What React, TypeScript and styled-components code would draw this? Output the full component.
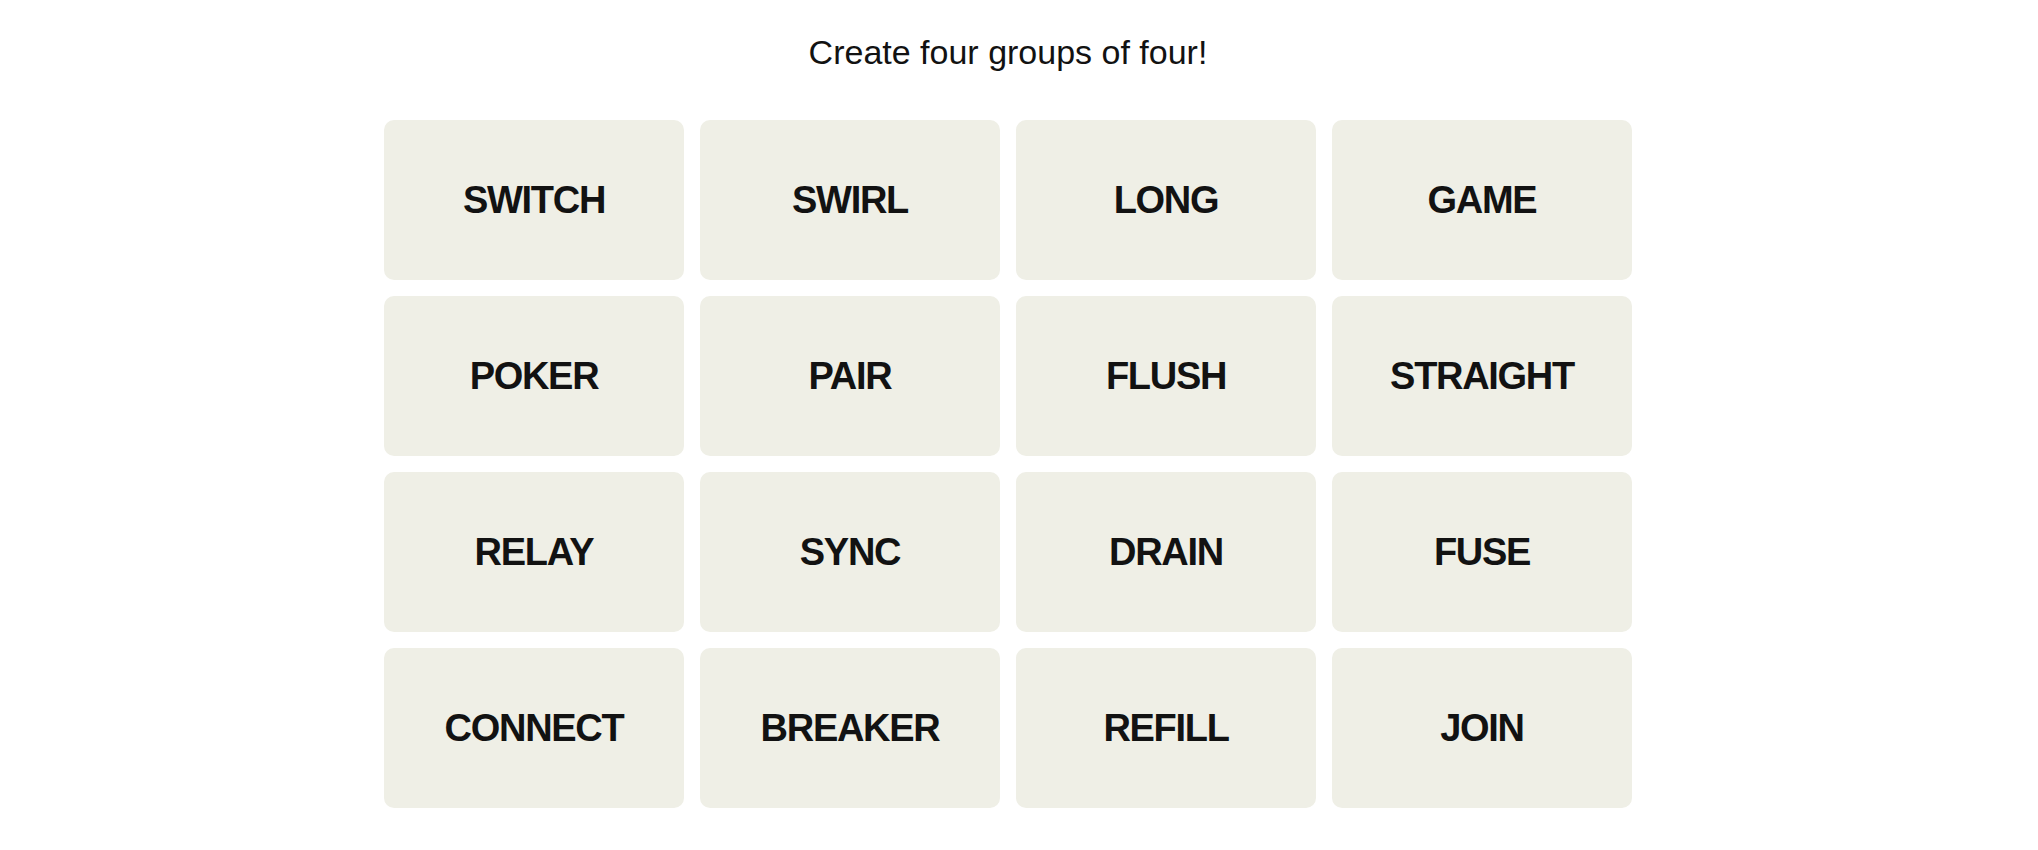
import { FC } from 'react';
import styled, { createGlobalStyle } from 'styled-components';

const GlobalStyle = createGlobalStyle`
  body {
    margin: 0;
    background: #ffffff;
    font-family: 'Liberation Sans', Arial, sans-serif;
    color: #121212;
  }
`;

const Page = styled.main`
  display: flex;
  flex-direction: column;
  align-items: center;
  padding: 32px 22px 0 0;
`;

const Prompt = styled.p`
  margin: 0 0 48px;
  font-size: 34px;
  line-height: 40px;
  font-weight: 400;
`;

const Board = styled.div`
  display: grid;
  grid-template-columns: repeat(4, 300px);
  grid-auto-rows: 160px;
  gap: 16px;
`;

const Tile = styled.button`
  display: flex;
  align-items: center;
  justify-content: center;
  border: none;
  border-radius: 10px;
  background: #efefe6;
  color: #121212;
  font-family: 'Liberation Sans', Arial, sans-serif;
  font-size: 38px;
  font-weight: 700;
  letter-spacing: -1.3px;
  text-transform: uppercase;
  cursor: pointer;
  padding: 0;
`;

const words = [
  'Switch', 'Swirl', 'Long', 'Game',
  'Poker', 'Pair', 'Flush', 'Straight',
  'Relay', 'Sync', 'Drain', 'Fuse',
  'Connect', 'Breaker', 'Refill', 'Join',
];

const App: FC = () => (
  <>
    <GlobalStyle />
    <Page>
      <Prompt>Create four groups of four!</Prompt>
      <Board>
        {words.map((w) => (
          <Tile key={w}>{w}</Tile>
        ))}
      </Board>
    </Page>
  </>
);

export default App;
